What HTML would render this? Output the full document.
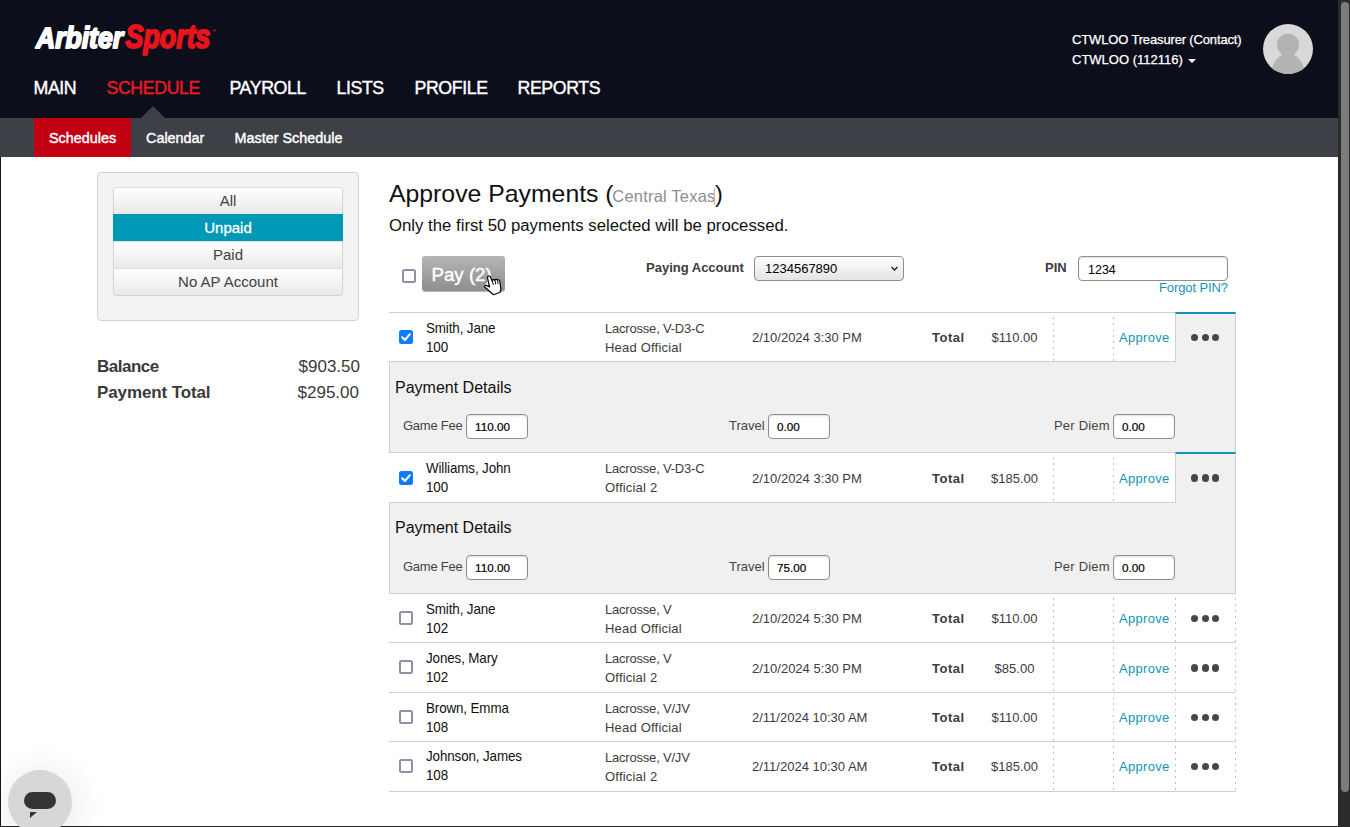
<!DOCTYPE html>
<html>
<head>
<meta charset="utf-8">
<title>Approve Payments</title>
<style>
html,body{margin:0;padding:0;}
body{width:1350px;height:827px;overflow:hidden;position:relative;background:#fff;font-family:"Liberation Sans",sans-serif;color:#3c3c3c;font-size:13px;}
.a{position:absolute;}
.t{position:absolute;white-space:nowrap;line-height:20px;}
.b{font-weight:bold;}
/* header */
#hdr{left:0;top:0;width:1338px;height:118px;background:#0d0e1c;}
#sub{left:0;top:118px;width:1338px;height:39px;background:#3e4048;}
#tab{left:34px;top:118px;width:97px;height:39px;background:#c20012;}
#tri{left:140.5px;top:105.5px;width:0;height:0;border-left:12.5px solid transparent;border-right:12.5px solid transparent;border-bottom:12.5px solid #3e4048;}
.nav{font-size:17.8px;color:#fff;top:78px;-webkit-text-stroke:.4px;letter-spacing:-.42px;margin-left:-.5px;}
.snav{font-size:14.4px;color:#fff;top:128px;-webkit-text-stroke:.42px;}
.usr{font-size:13px;color:#fff;-webkit-text-stroke:.25px;}
/* scrollbar */
#sbt{left:1338px;top:0;width:12px;height:827px;background:#2b2b2b;}
#sbh{left:1341px;top:2px;width:8px;height:790px;background:#7c7c7c;border-radius:4px;}
#lb{left:0;top:157px;width:1px;height:670px;background:#15151f;}
#bb{left:0;top:826px;width:1338px;height:1px;background:#222;}
/* left panel */
#lp{left:97px;top:172px;width:260px;height:147px;background:#f2f2f2;border:1px solid #d3d3d3;border-radius:4px;}
.fb{left:113px;width:228px;height:26px;border:1px solid #d4d4d4;border-top-color:#dedede;background:linear-gradient(#ffffff,#e9e9e9);text-align:center;font-size:15px;line-height:26px;color:#414141;}
.fb.sel{background:#0099b5;border-color:#0099b5;color:#fff;-webkit-text-stroke:.3px;}
.big{font-size:17px;color:#3a3a3a;}
/* form */
.lnk{color:#1295b5;}
.inp{position:absolute;box-sizing:border-box;border:1px solid #8f8f8f;border-radius:4px;background:#fff;box-shadow:inset 0 1px 2px rgba(0,0,0,.13);}
/* rows */
.hl{position:absolute;left:389px;width:847px;height:1px;background:#cfcfcf;}
.det{position:absolute;left:389px;width:845px;background:#f0f0f0;border:1px solid #cfcfcf;}
.dot{position:absolute;width:7.3px;height:7.3px;border-radius:4px;background:#474747;}
.vd{position:absolute;width:1px;background:repeating-linear-gradient(to bottom,transparent 0,transparent 4px,#c2c2c2 4px,#c2c2c2 6px);}
.cb{position:absolute;box-sizing:border-box;width:14px;height:14px;border:2px solid #8f8fa6;border-radius:2.5px;background:#fff;}
.cbc{position:absolute;width:14px;height:14px;border-radius:2.5px;background:#0f7bff;}
.mc{position:absolute;left:1175px;width:59px;background:#f0f0f0;border-left:1px solid #cfcfcf;border-right:1px solid #cfcfcf;border-top:2px solid #1295b5;}
.nm{color:#111;line-height:20px;font-size:13.4px;letter-spacing:-.12px;transform-origin:0 14.6px;transform:scaleY(1.06);}
.pd{font-size:16px;color:#111;line-height:22px;}
.fl{font-size:13px;color:#444;letter-spacing:-.25px;}
.fv{font-size:11.7px;color:#000;-webkit-text-stroke:.2px;}
</style>
</head>
<body>
<!-- HEADER -->
<div class="a" id="hdr"></div>
<div class="a" id="sub"></div>
<div class="a" id="tab"></div>
<div class="a" id="tri"></div>

<!-- logo -->
<svg class="a" id="logo" style="left:28px;top:15px;" width="200" height="50" viewBox="0 0 200 50" font-family="Liberation Sans, sans-serif" font-weight="bold" font-style="italic" stroke-linejoin="round"><text x="8" y="33" font-size="30" fill="#fff" stroke="#fff" stroke-width="1.9" textLength="87" lengthAdjust="spacingAndGlyphs">Arbiter</text><text x="97.500" y="33" font-size="33" fill="#e8141c" stroke="#e8141c" stroke-width="1.9" textLength="85" lengthAdjust="spacingAndGlyphs">Sports</text><circle cx="186.500" cy="15.500" r="1" fill="#e8141c"/></svg>

<div class="t nav" id="n1" style="left:34px;">MAIN</div>
<div class="t nav" id="n2" style="left:107px;color:#ec1a23;">SCHEDULE</div>
<div class="t nav" id="n3" style="left:230px;">PAYROLL</div>
<div class="t nav" id="n4" style="left:337px;">LISTS</div>
<div class="t nav" id="n5" style="left:415px;">PROFILE</div>
<div class="t nav" id="n6" style="left:518px;">REPORTS</div>

<div class="t snav" id="s1" style="left:49px;">Schedules</div>
<div class="t snav" id="s2" style="left:146px;">Calendar</div>
<div class="t snav" id="s3" style="left:234.5px;">Master Schedule</div>

<div class="t usr" id="u1" style="left:1072px;top:30px;letter-spacing:-.15px;">CTWLOO Treasurer (Contact)</div>
<div class="t usr" id="u2" style="left:1072px;top:50px;">CTWLOO (112116)</div>
<div class="a" id="caret" style="left:1188px;top:59px;width:0;height:0;border-left:4px solid transparent;border-right:4px solid transparent;border-top:4px solid #fff;"></div>
<svg class="a" id="avatar" style="left:1263px;top:24px;" width="50" height="50" viewBox="0 0 50 50"><defs><clipPath id="ac"><circle cx="25" cy="25" r="25"/></clipPath></defs><circle cx="25" cy="25" r="25" fill="#d9d9d9"/><g clip-path="url(#ac)" fill="#b3b3b3"><circle cx="25" cy="20.800" r="11.100"/><ellipse cx="25" cy="50" rx="16.500" ry="20.500"/></g></svg>

<!-- scrollbar and edges -->
<div class="a" id="sbt"></div>
<div class="a" id="sbh"></div>
<div class="a" id="lb"></div>
<div class="a" id="bb"></div>

<!-- LEFT PANEL -->
<div class="a" id="lp"></div>
<div class="a fb" style="top:187px;border-radius:4px 4px 0 0;">All</div>
<div class="a fb sel" style="top:214px;">Unpaid</div>
<div class="a fb" style="top:241px;">Paid</div>
<div class="a fb" style="top:268px;border-radius:0 0 4px 4px;">No AP Account</div>

<div class="t big b" id="bal" style="left:97px;top:357px;letter-spacing:-.5px;">Balance</div>
<div class="t big" id="balv" style="right:990px;top:357px;">$903.50</div>
<div class="t big b" id="pt" style="left:97px;top:383px;letter-spacing:-.12px;">Payment Total</div>
<div class="t big" id="ptv" style="right:991px;top:383px;">$295.00</div>

<!-- TITLE -->
<div class="t" id="title" style="left:389px;top:179px;font-size:23.4px;line-height:30px;color:#111;transform-origin:0 0;transform:scaleX(1.06);">Approve Payments (</div>
<div class="t" id="ctx" style="left:612.3px;top:181px;font-size:16.5px;line-height:30px;color:#8e8e8e;letter-spacing:.2px;">Central Texas</div>
<div class="a" style="left:714px;top:188px;width:1px;height:17px;background:#bdbdbd;"></div>
<div class="t" id="title2" style="left:715px;top:179px;font-size:23.4px;line-height:30px;color:#111;">)</div>
<div class="t" id="subt" style="left:389px;top:215px;font-size:16px;line-height:22px;color:#111;transform-origin:0 0;transform:scaleX(1.047);">Only the first 50 payments selected will be processed.</div>

<!-- FORM ROW -->
<div class="cb" style="left:402px;top:269px;"></div>
<div class="a" id="pay" style="left:422px;top:256px;width:83px;height:35px;border-radius:3px;background:linear-gradient(#b7b5b6,#8e8e8e);box-shadow:0 1px 0 rgba(120,120,120,.55);"></div>
<div class="t" id="payt" style="left:431.5px;top:265px;font-size:18.7px;color:#fff;-webkit-text-stroke:.4px;">Pay (2)</div>
<svg class="a" id="cursor" style="left:475px;top:268px;" width="40" height="32" viewBox="0 0 1034 827"><path d="M322 250C314 205 382 190 398 235L442 335C452 292 502 287 512 322C524 287 572 287 582 322C594 292 634 297 642 342L666 520C673 570 662 602 641 632L470 690C420 640 330 560 252 492C234 470 262 438 292 450L378 488Z" fill="#fff" stroke="#000" stroke-width="30" stroke-linejoin="round"/><path d="M450 345L472 430M520 335L534 415M588 338L596 405" stroke="#000" stroke-width="24" fill="none" stroke-linecap="round"/></svg>

<div class="t b" id="pal" style="left:646px;top:258px;">Paying Account</div>
<div class="inp" id="sel" style="left:754px;top:256px;width:150px;height:25px;background:linear-gradient(#ffffff,#e4e4e4);box-shadow:none;"></div>
<div class="t" id="selt" style="left:765px;top:259px;color:#000;">1234567890</div>
<svg class="a" style="left:890px;top:265px;" width="9" height="7" viewBox="0 0 9 7"><path d="M1.500 2L4.500 5 7.500 2" fill="none" stroke="#222" stroke-width="1.400"/></svg>

<div class="t b" id="pinl" style="left:1045px;top:258px;">PIN</div>
<div class="inp" id="pin" style="left:1078px;top:256px;width:150px;height:25px;"></div>
<div class="t" id="pint" style="left:1088px;top:260px;color:#000;font-size:12.5px;">1234</div>
<div class="t lnk" id="fp" style="left:1159px;top:277.5px;letter-spacing:-.1px;">Forgot PIN?</div>

<!-- ROWS inserted below -->
<div id="rows">
<!-- row 1 -->
<div class="det" style="top:361px;height:90px;"></div>
<div class="mc" style="top:312px;height:48px;"></div>
<div class="hl" style="top:312px;width:786px;"></div>
<div class="vd" style="left:1053px;top:313px;height:48px;"></div>
<div class="vd" style="left:1113px;top:313px;height:48px;"></div>
<div class="cbc" style="left:399px;top:330px;"><svg width="14" height="14" viewBox="0 0 14 14" style="display:block"><path d="M3.2 7.300L5.900 10 10.900 4.200" fill="none" stroke="#fff" stroke-width="2" stroke-linecap="round" stroke-linejoin="round"/></svg></div>
<div class="t nm" id="r1n" style="left:426px;top:319px;">Smith, Jane</div>
<div class="t nm" id="r1u" style="left:426px;top:338px;">100</div>
<div class="t" id="r1s" style="left:605px;top:319px;letter-spacing:-.2px;">Lacrosse, V-D3-C</div>
<div class="t" id="r1r" style="left:605px;top:338px;letter-spacing:.2px;">Head Official</div>
<div class="t" id="r1d" style="left:752px;top:328px;">2/10/2024 3:30 PM</div>
<div class="t b" id="r1t" style="left:932px;top:328px;letter-spacing:.5px;">Total</div>
<div class="t" id="r1a" style="left:964px;width:101px;text-align:center;top:328px;">$110.00</div>
<div class="t lnk" id="r1p" style="left:1119px;top:328px;letter-spacing:.3px;">Approve</div>
<div class="dot" style="left:1190.5px;top:333.8px;"></div>
<div class="dot" style="left:1201.6px;top:333.8px;"></div>
<div class="dot" style="left:1212.1px;top:333.8px;"></div>
<div class="t pd" id="r1pd" style="left:395px;top:377px;">Payment Details</div>
<div class="t fl" id="r1lg" style="left:403px;top:416px;letter-spacing:-0.25px;">Game Fee</div>
<div class="inp" style="left:466px;top:414px;width:62px;height:25px;"></div>
<div class="t fv" id="r1vg" style="left:475px;top:417px;">110.00</div>
<div class="t fl" id="r1lt" style="left:729px;top:416px;letter-spacing:0px;">Travel</div>
<div class="inp" style="left:768px;top:414px;width:62px;height:25px;"></div>
<div class="t fv" id="r1vt" style="left:777px;top:417px;">0.00</div>
<div class="t fl" id="r1lp" style="left:1054px;top:416px;letter-spacing:0.2px;">Per Diem</div>
<div class="inp" style="left:1113px;top:414px;width:62px;height:25px;"></div>
<div class="t fv" id="r1vp" style="left:1122px;top:417px;">0.00</div>
<!-- row 2 -->
<div class="det" style="top:502px;height:90px;"></div>
<div class="mc" style="top:452px;height:49px;"></div>
<div class="hl" style="top:452px;width:786px;"></div>
<div class="vd" style="left:1053px;top:453px;height:49px;"></div>
<div class="vd" style="left:1113px;top:453px;height:49px;"></div>
<div class="cbc" style="left:399px;top:471px;"><svg width="14" height="14" viewBox="0 0 14 14" style="display:block"><path d="M3.2 7.300L5.900 10 10.900 4.200" fill="none" stroke="#fff" stroke-width="2" stroke-linecap="round" stroke-linejoin="round"/></svg></div>
<div class="t nm" id="r2n" style="left:426px;top:459px;">Williams, John</div>
<div class="t nm" id="r2u" style="left:426px;top:478px;">100</div>
<div class="t" id="r2s" style="left:605px;top:459px;letter-spacing:-.2px;">Lacrosse, V-D3-C</div>
<div class="t" id="r2r" style="left:605px;top:478px;letter-spacing:.2px;">Official 2</div>
<div class="t" id="r2d" style="left:752px;top:469px;">2/10/2024 3:30 PM</div>
<div class="t b" id="r2t" style="left:932px;top:469px;letter-spacing:.5px;">Total</div>
<div class="t" id="r2a" style="left:964px;width:101px;text-align:center;top:469px;">$185.00</div>
<div class="t lnk" id="r2p" style="left:1119px;top:469px;letter-spacing:.3px;">Approve</div>
<div class="dot" style="left:1190.5px;top:474.40000000000003px;"></div>
<div class="dot" style="left:1201.6px;top:474.40000000000003px;"></div>
<div class="dot" style="left:1212.1px;top:474.40000000000003px;"></div>
<div class="t pd" id="r2pd" style="left:395px;top:517px;">Payment Details</div>
<div class="t fl" id="r2lg" style="left:403px;top:557px;letter-spacing:-0.25px;">Game Fee</div>
<div class="inp" style="left:466px;top:555px;width:62px;height:25px;"></div>
<div class="t fv" id="r2vg" style="left:475px;top:558px;">110.00</div>
<div class="t fl" id="r2lt" style="left:729px;top:557px;letter-spacing:0px;">Travel</div>
<div class="inp" style="left:768px;top:555px;width:62px;height:25px;"></div>
<div class="t fv" id="r2vt" style="left:777px;top:558px;">75.00</div>
<div class="t fl" id="r2lp" style="left:1054px;top:557px;letter-spacing:0.2px;">Per Diem</div>
<div class="inp" style="left:1113px;top:555px;width:62px;height:25px;"></div>
<div class="t fv" id="r2vp" style="left:1122px;top:558px;">0.00</div>
<!-- row 3 -->
<div class="hl" style="top:593px;"></div>
<div class="vd" style="left:1053px;top:594px;height:48px;"></div>
<div class="vd" style="left:1113px;top:594px;height:48px;"></div>
<div class="vd" style="left:1175px;top:594px;height:48px;"></div>
<div class="vd" style="left:1235px;top:594px;height:48px;"></div>
<div class="cb" style="left:399px;top:611px;"></div>
<div class="t nm" id="r3n" style="left:426px;top:600px;">Smith, Jane</div>
<div class="t nm" id="r3u" style="left:426px;top:619px;">102</div>
<div class="t" id="r3s" style="left:605px;top:600px;letter-spacing:-.2px;">Lacrosse, V</div>
<div class="t" id="r3r" style="left:605px;top:619px;letter-spacing:.2px;">Head Official</div>
<div class="t" id="r3d" style="left:752px;top:609px;">2/10/2024 5:30 PM</div>
<div class="t b" id="r3t" style="left:932px;top:609px;letter-spacing:.5px;">Total</div>
<div class="t" id="r3a" style="left:964px;width:101px;text-align:center;top:609px;">$110.00</div>
<div class="t lnk" id="r3p" style="left:1119px;top:609px;letter-spacing:.3px;">Approve</div>
<div class="dot" style="left:1190.5px;top:614.8px;"></div>
<div class="dot" style="left:1201.6px;top:614.8px;"></div>
<div class="dot" style="left:1212.1px;top:614.8px;"></div>
<!-- row 4 -->
<div class="hl" style="top:642px;"></div>
<div class="vd" style="left:1053px;top:643px;height:49px;"></div>
<div class="vd" style="left:1113px;top:643px;height:49px;"></div>
<div class="vd" style="left:1175px;top:643px;height:49px;"></div>
<div class="vd" style="left:1235px;top:643px;height:49px;"></div>
<div class="cb" style="left:399px;top:660px;"></div>
<div class="t nm" id="r4n" style="left:426px;top:649px;">Jones, Mary</div>
<div class="t nm" id="r4u" style="left:426px;top:668px;">102</div>
<div class="t" id="r4s" style="left:605px;top:649px;letter-spacing:-.2px;">Lacrosse, V</div>
<div class="t" id="r4r" style="left:605px;top:668px;letter-spacing:.2px;">Official 2</div>
<div class="t" id="r4d" style="left:752px;top:659px;">2/10/2024 5:30 PM</div>
<div class="t b" id="r4t" style="left:932px;top:659px;letter-spacing:.5px;">Total</div>
<div class="t" id="r4a" style="left:964px;width:101px;text-align:center;top:659px;">$85.00</div>
<div class="t lnk" id="r4p" style="left:1119px;top:659px;letter-spacing:.3px;">Approve</div>
<div class="dot" style="left:1190.5px;top:664.4px;"></div>
<div class="dot" style="left:1201.6px;top:664.4px;"></div>
<div class="dot" style="left:1212.1px;top:664.4px;"></div>
<!-- row 5 -->
<div class="hl" style="top:692px;"></div>
<div class="vd" style="left:1053px;top:693px;height:48px;"></div>
<div class="vd" style="left:1113px;top:693px;height:48px;"></div>
<div class="vd" style="left:1175px;top:693px;height:48px;"></div>
<div class="vd" style="left:1235px;top:693px;height:48px;"></div>
<div class="cb" style="left:399px;top:710px;"></div>
<div class="t nm" id="r5n" style="left:426px;top:699px;">Brown, Emma</div>
<div class="t nm" id="r5u" style="left:426px;top:718px;">108</div>
<div class="t" id="r5s" style="left:605px;top:699px;letter-spacing:-.2px;">Lacrosse, V/JV</div>
<div class="t" id="r5r" style="left:605px;top:718px;letter-spacing:.2px;">Head Official</div>
<div class="t" id="r5d" style="left:752px;top:708px;">2/11/2024 10:30 AM</div>
<div class="t b" id="r5t" style="left:932px;top:708px;letter-spacing:.5px;">Total</div>
<div class="t" id="r5a" style="left:964px;width:101px;text-align:center;top:708px;">$110.00</div>
<div class="t lnk" id="r5p" style="left:1119px;top:708px;letter-spacing:.3px;">Approve</div>
<div class="dot" style="left:1190.5px;top:713.8px;"></div>
<div class="dot" style="left:1201.6px;top:713.8px;"></div>
<div class="dot" style="left:1212.1px;top:713.8px;"></div>
<!-- row 6 -->
<div class="hl" style="top:741px;"></div>
<div class="vd" style="left:1053px;top:742px;height:49px;"></div>
<div class="vd" style="left:1113px;top:742px;height:49px;"></div>
<div class="vd" style="left:1175px;top:742px;height:49px;"></div>
<div class="vd" style="left:1235px;top:742px;height:49px;"></div>
<div class="cb" style="left:399px;top:759px;"></div>
<div class="t nm" id="r6n" style="left:426px;top:747px;">Johnson, James</div>
<div class="t nm" id="r6u" style="left:426px;top:766px;">108</div>
<div class="t" id="r6s" style="left:605px;top:748px;letter-spacing:-.2px;">Lacrosse, V/JV</div>
<div class="t" id="r6r" style="left:605px;top:767px;letter-spacing:.2px;">Official 2</div>
<div class="t" id="r6d" style="left:752px;top:757px;">2/11/2024 10:30 AM</div>
<div class="t b" id="r6t" style="left:932px;top:757px;letter-spacing:.5px;">Total</div>
<div class="t" id="r6a" style="left:964px;width:101px;text-align:center;top:757px;">$185.00</div>
<div class="t lnk" id="r6p" style="left:1119px;top:757px;letter-spacing:.3px;">Approve</div>
<div class="dot" style="left:1190.5px;top:762.8px;"></div>
<div class="dot" style="left:1201.6px;top:762.8px;"></div>
<div class="dot" style="left:1212.1px;top:762.8px;"></div>
<div class="hl" style="top:791px;"></div>
</div><!--/rows-->

<!-- chat bubble -->
<div class="a" id="chat" style="left:8px;top:770px;width:64px;height:64px;border-radius:32px;background:#d7d7d7;box-shadow:2px 4px 36px rgba(0,0,0,.11);"></div>
<div class="a" style="left:24px;top:792px;width:32px;height:17px;border-radius:8.5px;background:#333;"></div>
<div class="a" style="left:30px;top:812px;width:0;height:0;border-top:6px solid #333;border-right:7px solid transparent;"></div>
</body>
</html>
